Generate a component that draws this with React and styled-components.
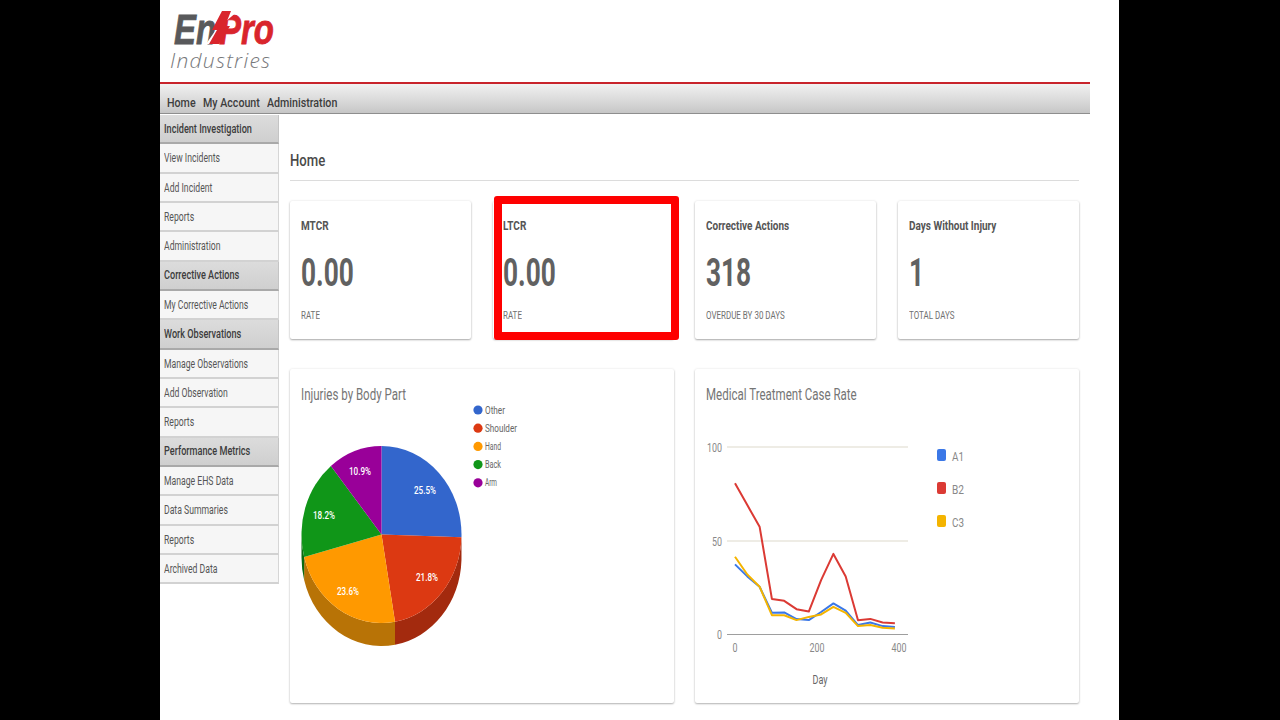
import React from "react";
import styled, { createGlobalStyle, css } from "styled-components";

const squeezed = css`
  display: inline-block;
  white-space: nowrap;
  transform: scaleX(${(p) => p.$squeeze || 0.78});
  transform-origin: left center;
`;

const sideMenu = [
  { title: "Incident Investigation", items: ["View Incidents", "Add Incident", "Reports", "Administration"] },
  { title: "Corrective Actions", items: ["My Corrective Actions"] },
  { title: "Work Observations", items: ["Manage Observations", "Add Observation", "Reports"] },
  { title: "Performance Metrics", items: ["Manage EHS Data", "Data Summaries", "Reports", "Archived Data"] },
];

const stats = [
  { title: "MTCR", value: "0.00", sub: "RATE" },
  { title: "LTCR", value: "0.00", sub: "RATE", marked: true },
  { title: "Corrective Actions", value: "318", sub: "OVERDUE BY 30 DAYS" },
  { title: "Days Without Injury", value: "1", sub: "TOTAL DAYS" },
];

const slices = [
  { label: "Other", pct: 25.5, color: "#3366cc", side: "#24478f", x: 425, y: 490 },
  { label: "Shoulder", pct: 21.8, color: "#dc3912", side: "#a32a0e", x: 427, y: 577 },
  { label: "Hand", pct: 23.6, color: "#ff9900", side: "#b87306", x: 348, y: 591 },
  { label: "Back", pct: 18.2, color: "#109618", side: "#0b6a11", x: 324, y: 515 },
  { label: "Arm", pct: 10.9, color: "#990099", side: "#6b006b", x: 360, y: 471 },
];

const days = [0, 30, 60, 90, 120, 150, 180, 210, 240, 270, 300, 330, 360, 390];
const series = [
  { name: "A1", color: "#3b78e7", y: 456, data: [37.4, 31, 25.5, 11.6, 11.8, 8.2, 7.7, 12, 16.6, 12.7, 5, 6.4, 4.5, 4] },
  { name: "B2", color: "#db3a34", y: 489, data: [80.7, 69, 57.5, 19, 18, 13.5, 12.2, 29, 43, 31, 7.6, 8.3, 6.4, 6] },
  { name: "C3", color: "#f4b400", y: 522, data: [41.5, 32, 25.5, 10.3, 10.3, 7.7, 9.4, 10.7, 14.8, 11.6, 4.5, 5, 3.6, 3.2] },
];

const CX = 381.5;
const CY = 534.5;
const RX = 80;
const RY = 88.5;
const DEPTH = 23;

const point = (deg, dy = 0) => {
  const r = (deg * Math.PI) / 180;
  return `${(CX + RX * Math.sin(r)).toFixed(2)} ${(CY - RY * Math.cos(r) + dy).toFixed(2)}`;
};

const slicePath = (a, b) =>
  `M${CX} ${CY} L${point(a)} A${RX} ${RY} 0 ${b - a > 180 ? 1 : 0} 1 ${point(b)} Z`;

// outer wall of the pie, only the part facing the viewer
const wallPath = (a, b) => {
  const from = Math.max(a, 90);
  const to = Math.min(b, 270);
  if (to <= from) return null;
  return `M${point(from)} A${RX} ${RY} 0 0 1 ${point(to)} L${point(to, DEPTH)} A${RX} ${RY} 0 0 0 ${point(from, DEPTH)} Z`;
};

const PieChart = () => {
  let angle = 0;
  const parts = slices.map((s) => {
    const a = angle;
    angle += (s.pct / 100) * 360;
    return { ...s, a, b: angle };
  });
  return (
    <ChartSvg viewBox="290 405 384 298">
      {parts.map((s) => {
        const wall = wallPath(s.a, s.b);
        return wall ? <path key={s.label} d={wall} fill={s.side} /> : null;
      })}
      {parts.map((s) => (
        <path key={s.label} d={slicePath(s.a, s.b)} fill={s.color} />
      ))}
      {parts.map((s) => (
        <text key={s.label} x={s.x} y={s.y + 3.5} fill="#fff" fontSize="10.5" fontWeight="500" textAnchor="middle" textLength="22" lengthAdjust="spacingAndGlyphs">
          {s.pct}%
        </text>
      ))}
      {parts.map((s, i) => (
        <g key={s.label}>
          <circle cx="478" cy={410 + i * 18.2} r="4.6" fill={s.color} />
          <text x="485" y={413.5 + i * 18.2} fill="#666" fontSize="10.5" textLength={s.label.length * 4} lengthAdjust="spacingAndGlyphs">
            {s.label}
          </text>
        </g>
      ))}
    </ChartSvg>
  );
};

const dayX = (d) => 735 + d * 0.41;
const rateY = (v) => 634.5 - v * 1.875;

const LineChart = () => (
  <ChartSvg viewBox="695 405 384 298">
    <line x1="727" x2="908" y1="447" y2="447" stroke="#e8e6dc" strokeWidth="1.4" />
    <line x1="727" x2="908" y1="541" y2="541" stroke="#e8e6dc" strokeWidth="1.4" />
    <line x1="727" x2="908" y1="634.5" y2="634.5" stroke="#9e9e9e" strokeWidth="1.2" />
    {[["100", 447, 15], ["50", 541, 10], ["0", 634, 5]].map(([t, y, w]) => (
      <text key={t} x="722" y={y + 5} fill="#888" fontSize="12" textAnchor="end" textLength={w} lengthAdjust="spacingAndGlyphs">{t}</text>
    ))}
    {[["0", 735, 5], ["200", 817, 15], ["400", 899, 15]].map(([t, x, w]) => (
      <text key={t} x={x} y="652" fill="#888" fontSize="12" textAnchor="middle" textLength={w} lengthAdjust="spacingAndGlyphs">{t}</text>
    ))}
    <text x="820" y="684" fill="#666" fontSize="12" textAnchor="middle" textLength="15" lengthAdjust="spacingAndGlyphs">Day</text>
    {series.map((s) => (
      <polyline
        key={s.name}
        points={s.data.map((v, i) => `${dayX(days[i]).toFixed(1)},${rateY(v).toFixed(1)}`).join(" ")}
        fill="none"
        stroke={s.color}
        strokeWidth="2"
        strokeLinejoin="round"
      />
    ))}
    {series.map((s) => (
      <g key={s.name}>
        <rect x="937" y={s.y - 7} width="9" height="12" rx="2" fill={s.color} />
        <text x="952" y={s.y + 5} fill="#888" fontSize="13" textLength="12" lengthAdjust="spacingAndGlyphs">{s.name}</text>
      </g>
    ))}
  </ChartSvg>
);

const Logo = () => (
  <LogoSvg viewBox="165 5 150 70">
    <text x="174" y="44" fill="#58595b" stroke="#58595b" strokeWidth="0.8" fontFamily="Liberation Sans" fontWeight="700" fontStyle="italic" fontSize="42" textLength="42" lengthAdjust="spacingAndGlyphs">En</text>
    <text x="219" y="44" fill="#d9252c" stroke="#d9252c" strokeWidth="0.8" fontFamily="Liberation Sans" fontWeight="700" fontStyle="italic" fontSize="42" textLength="55" lengthAdjust="spacingAndGlyphs">Pro</text>
    <polygon points="206,44 229,11 238,11 225,22 216,44" fill="#fff" />
    <polygon points="222,11 231,11 225,26 230,26 219,44 209,44 217,30 212,30" fill="#d9252c" />
    <text x="170" y="68" fill="#77787b" fontFamily="Open Sans" fontStyle="italic" fontWeight="300" fontSize="21" textLength="100" lengthAdjust="spacing">Industries</text>
  </LogoSvg>
);

const App = () => (
  <Page>
    <GlobalStyle />
    <Header>
      <Logo />
    </Header>
    <NavBar>
      <NavLink $w={36}>Home</NavLink>
      <NavLink $w={64}>My Account</NavLink>
      <NavLink>Administration</NavLink>
    </NavBar>
    <Content>
      <Sidebar>
        {sideMenu.map((group) => (
          <React.Fragment key={group.title}>
            <SideHeader><SideText $squeeze={0.76}>{group.title}</SideText></SideHeader>
            {group.items.map((item) => (
              <SideItem key={group.title + item}><SideText $squeeze={0.72}>{item}</SideText></SideItem>
            ))}
          </React.Fragment>
        ))}
      </Sidebar>
      <Main>
        <PageTitle><span>Home</span></PageTitle>
        <CardRow>
          {stats.map((s) => (
            <StatCard key={s.title} $marked={s.marked}>
              <StatTitle>{s.title}</StatTitle>
              <StatValue>{s.value}</StatValue>
              <StatSub>{s.sub}</StatSub>
            </StatCard>
          ))}
        </CardRow>
        <ChartRow>
          <ChartCard>
            <ChartTitle>Injuries by Body Part</ChartTitle>
            <PieChart />
          </ChartCard>
          <ChartCard>
            <ChartTitle>Medical Treatment Case Rate</ChartTitle>
            <LineChart />
          </ChartCard>
        </ChartRow>
      </Main>
    </Content>
  </Page>
);

const GlobalStyle = createGlobalStyle`
  html, body {
    margin: 0;
    height: 100%;
    background: #000;
    overflow: hidden;
    font-family: Roboto, "Liberation Sans", sans-serif;
  }
`;

const Page = styled.div`
  width: 959px;
  height: 720px;
  margin-left: 160px;
  background: #fff;
  overflow: hidden;
`;

const Header = styled.header`
  width: 930px;
  height: 84px;
  box-sizing: border-box;
  border-bottom: 2px solid #c8232b;
`;

const LogoSvg = styled.svg`
  display: block;
  width: 150px;
  height: 70px;
  margin-left: 5px;
  padding-top: 5px;
`;

const NavBar = styled.nav`
  width: 930px;
  height: 30px;
  box-sizing: border-box;
  padding: 11px 0 0 7px;
  display: flex;
  background: linear-gradient(#f1f1f1, #d4d4d4 70%, #c6c6c6);
  border-bottom: 1px solid #8e8e8e;
`;

const NavLink = styled.a`
  ${squeezed}
  width: ${(p) => (p.$w ? `${p.$w}px` : "auto")};
  font-size: 13px;
  line-height: 15px;
  font-weight: 500;
  color: #3d3d3d;
  transform: scaleX(0.82);
`;

const Content = styled.div`
  display: flex;
`;

const Sidebar = styled.aside`
  width: 119px;
  flex: none;
  padding-top: 1px;
`;

const SideText = styled.span`
  ${squeezed}
`;

const SideHeader = styled.div`
  height: 29.33px;
  box-sizing: border-box;
  padding-left: 4px;
  display: flex;
  align-items: center;
  font-size: 12px;
  font-weight: 500;
  color: #3c3c3c;
  background: linear-gradient(#dcdcdc, #cfcfcf);
  border-bottom: 2px solid #a9a9a9;
  border-right: 1px solid #c4c4c4;
`;

const SideItem = styled.div`
  height: 29.33px;
  box-sizing: border-box;
  padding: 1px 0 0 4px;
  display: flex;
  align-items: center;
  font-size: 12px;
  color: #555;
  background: #f6f6f6;
  border-bottom: 2px solid #d2d2d2;
  border-right: 1px solid #d6d6d6;
`;

const Main = styled.main`
  flex: 1;
  min-width: 0;
  padding: 0 40px 0 11px;
`;

const PageTitle = styled.h1`
  margin: 0;
  height: 67px;
  box-sizing: border-box;
  padding-top: 37px;
  border-bottom: 1px solid #dcdcdc;
  font-size: 16px;
  line-height: 20px;
  font-weight: 500;
  color: #4a4a4a;
  span {
    ${squeezed}
    transform: scaleX(0.82);
  }
`;

const CardRow = styled.div`
  display: grid;
  grid-template-columns: repeat(4, 181px);
  column-gap: 21.6px;
  margin-top: 20px;
`;

const StatCard = styled.div`
  position: relative;
  height: 138px;
  box-sizing: border-box;
  padding: 16px 11px 0;
  background: #fff;
  box-shadow: 0 1px 2px rgba(0, 0, 0, 0.32), 0 0 3px rgba(0, 0, 0, 0.08);
  border-radius: 2px;
  ${(p) =>
    p.$marked &&
    css`
      padding-left: 10px;
      &::after {
        content: "";
        position: absolute;
        left: 1px;
        top: -5px;
        width: 185px;
        height: 144px;
        box-sizing: border-box;
        border: 8px solid #fe0000;
        border-radius: 3px;
      }
    `}
`;

const StatTitle = styled.div`
  ${squeezed}
  display: block;
  font-size: 13.5px;
  line-height: 16px;
  font-weight: 700;
  color: #555;
  transform: scaleX(0.74);
`;

const StatValue = styled.div`
  ${squeezed}
  display: block;
  margin-top: 18px;
  font-size: 38px;
  line-height: 44px;
  font-weight: 700;
  color: #616161;
  transform: scaleX(0.69);
`;

const StatSub = styled.div`
  ${squeezed}
  display: block;
  margin-top: 14px;
  font-size: 10.5px;
  line-height: 14px;
  color: #707070;
  transform: scaleX(0.76);
`;

const ChartRow = styled.div`
  display: grid;
  grid-template-columns: 384px 384px;
  column-gap: 21px;
  margin-top: 30px;
`;

const ChartCard = styled.section`
  height: 334px;
  box-sizing: border-box;
  padding-top: 16px;
  background: #fff;
  box-shadow: 0 1px 2px rgba(0, 0, 0, 0.28), 0 0 3px rgba(0, 0, 0, 0.08);
  border-radius: 2px;
`;

const ChartTitle = styled.h2`
  ${squeezed}
  display: block;
  margin: 0 0 0 11px;
  height: 20px;
  font-size: 16px;
  line-height: 20px;
  font-weight: 400;
  color: #757575;
  transform: scaleX(0.72);
`;

const ChartSvg = styled.svg`
  display: block;
  width: 384px;
  height: 298px;
  text {
    font-family: Roboto, "Liberation Sans", sans-serif;
  }
`;

export default App;
